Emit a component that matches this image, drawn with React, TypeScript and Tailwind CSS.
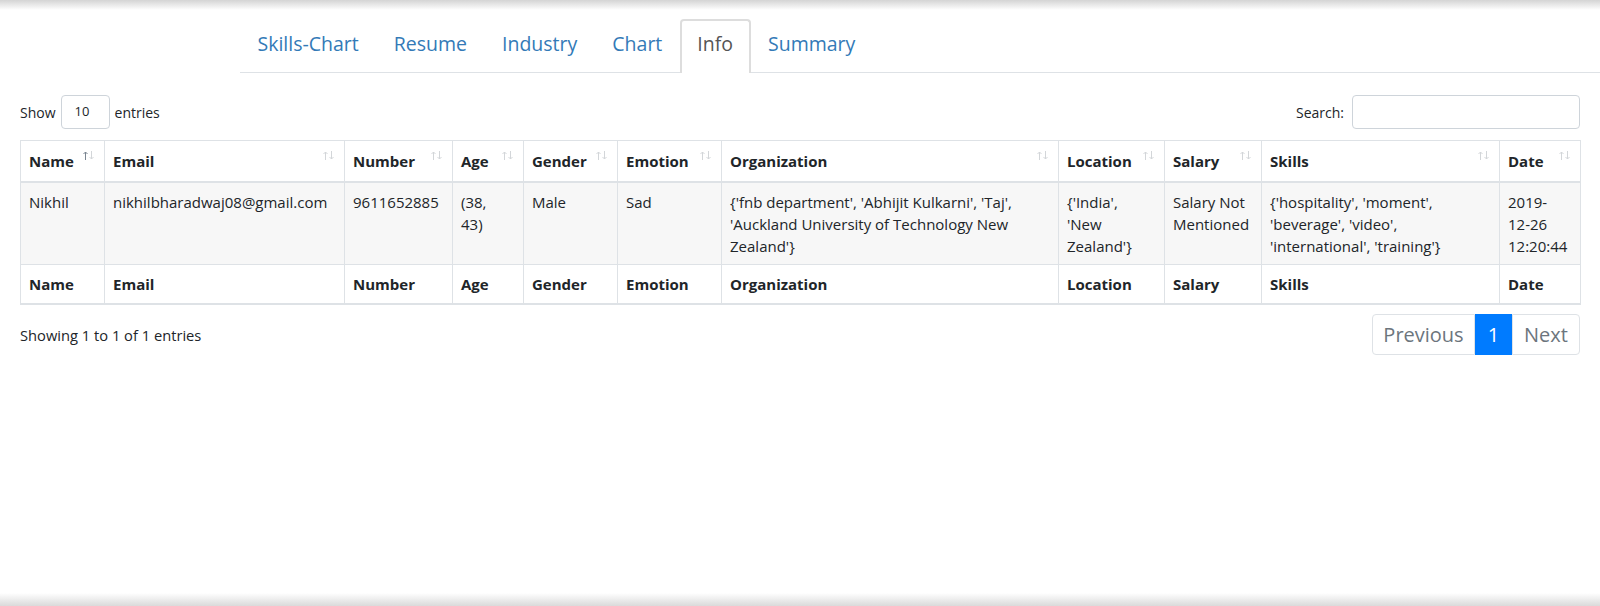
import React from "react";

const tabs = ["Skills-Chart", "Resume", "Industry", "Chart", "Info", "Summary"];

const columns = [
  { key: "name", label: "Name", width: "w-[84px]", active: true },
  { key: "email", label: "Email", width: "w-[240px]" },
  { key: "number", label: "Number", width: "w-[108px]" },
  { key: "age", label: "Age", width: "w-[71px]" },
  { key: "gender", label: "Gender", width: "w-[94px]" },
  { key: "emotion", label: "Emotion", width: "w-[104px]" },
  { key: "organization", label: "Organization", width: "w-[337px]" },
  { key: "location", label: "Location", width: "w-[106px]" },
  { key: "salary", label: "Salary", width: "w-[97px]" },
  { key: "skills", label: "Skills", width: "w-[238px]" },
  { key: "date", label: "Date", width: "w-[81px]" },
];

const row: Record<string, string> = {
  name: "Nikhil",
  email: "nikhilbharadwaj08@gmail.com",
  number: "9611652885",
  age: "(38, 43)",
  gender: "Male",
  emotion: "Sad",
  organization:
    "{'fnb department', 'Abhijit Kulkarni', 'Taj', 'Auckland University of Technology New Zealand'}",
  location: "{'India', 'New Zealand'}",
  salary: "Salary Not Mentioned",
  skills: "{'hospitality', 'moment', 'beverage', 'video', 'international', 'training'}",
  date: "2019-12-26 12:20:44",
};

const cellPadRight: Record<string, string> = {
  age: "pr-[13px]",
  date: "pr-[11px]",
};

function SortIcon({ active }: { active?: boolean }) {
  return (
    <svg width="13" height="9" viewBox="0 0 13 9" fill="none" strokeWidth="1" className="mt-[2px] shrink-0">
      <path d="M3.5 9V1M1.5 3L3.5 1L5.5 3" stroke={active ? "#7a8591" : "#d3d6d9"} />
      <path d="M9.5 0V8M7.5 6L9.5 8L11.5 6" stroke="#d3d6d9" />
    </svg>
  );
}

export default function App() {
  return (
    <div className="flex h-[606px] flex-col bg-white font-['Open_Sans',sans-serif] text-[#212529]">
      {/* top shadow */}
      <div className="h-[10px] bg-linear-to-b from-[#d4d4d4] to-white" />

      {/* Tabs */}
      <div className="mt-[9px] pl-[240px]">
        <ul className="flex border-b border-[#dee2e6]">
          {tabs.map((tab) => (
            <li key={tab} className="-mb-px">
              <a
                href="#"
                className={`block rounded-t-[4px] border-2 border-b-0 px-[15.5px] pt-[8px] pb-[14px] text-[19.5px] leading-[30px] ${
                  tab === "Info"
                    ? "border-[#dddddd] bg-white text-[#555555]"
                    : "border-transparent text-[#337ab7]"
                }`}
              >
                {tab}
              </a>
            </li>
          ))}
        </ul>
      </div>

      <div className="px-[20px]">
        {/* Length + search */}
        <div className="mt-[22px] flex h-[34px] items-center justify-between text-[14px]">
          <div className="flex items-center">
            <span>Show</span>
            <div className="mx-[5px] flex h-[34px] w-[49px] items-center rounded-[4px] border border-[#ced4da] pl-[13px] text-[13px]">
              10
            </div>
            <span>entries</span>
          </div>
          <div className="flex items-center gap-[8px]">
            <span>Search:</span>
            <input
              type="search"
              className="h-[34px] w-[228px] rounded-[4px] border border-[#ced4da] bg-white px-[12px] outline-none"
            />
          </div>
        </div>

        {/* Table */}
        <table className="mt-[11px] w-[1560px] table-fixed border-collapse border border-[#dee2e6] text-[15px] leading-6">
          <colgroup>
            {columns.map((c) => (
              <col key={c.key} className={c.width} />
            ))}
          </colgroup>
          <thead>
            <tr>
              {columns.map((c) => (
                <th
                  key={c.key}
                  className="border border-b-2 border-[#dee2e6] py-[8px] pr-[9px] pl-[8px] text-left font-bold"
                >
                  <div className="flex items-start justify-between">
                    <span>{c.label}</span>
                    <SortIcon active={c.active} />
                  </div>
                </th>
              ))}
            </tr>
          </thead>
          <tbody>
            <tr className="bg-[#f7f7f7]">
              {columns.map((c) => (
                <td
                  key={c.key}
                  className={`border border-[#dee2e6] py-[7.5px] pl-[8px] align-top leading-[22px] ${
                    cellPadRight[c.key] ?? "pr-[8px]"
                  }`}
                >
                  {row[c.key]}
                </td>
              ))}
            </tr>
          </tbody>
          <tfoot>
            <tr>
              {columns.map((c) => (
                <th
                  key={c.key}
                  className="border border-b-2 border-[#dee2e6] px-[8px] py-[7px] text-left font-bold"
                >
                  {c.label}
                </th>
              ))}
            </tr>
          </tfoot>
        </table>

        {/* Info + pagination */}
        <div className="mt-[9px] flex items-center justify-between">
          <span className="mt-[2px] text-[14.7px]">Showing 1 to 1 of 1 entries</span>
          <div className="flex text-[20px] leading-[25px] text-[#6c757d]">
            <span className="flex h-[41px] w-[103px] items-center justify-center rounded-l-[4px] border border-[#dee2e6]">
              Previous
            </span>
            <span className="flex h-[41px] w-[37px] items-center justify-center border border-[#007bff] bg-[#007bff] text-white">
              1
            </span>
            <span className="flex h-[41px] w-[68px] items-center justify-center rounded-r-[4px] border border-[#dee2e6]">
              Next
            </span>
          </div>
        </div>
      </div>

      {/* bottom shadow */}
      <div className="mt-auto h-[13px] bg-linear-to-b from-white to-[#dadada]" />
    </div>
  );
}
